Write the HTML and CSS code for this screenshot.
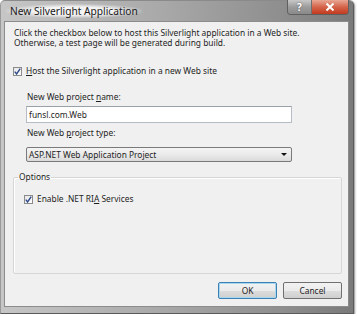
FILE: index.html
```html
<!DOCTYPE html>
<html lang="en">
<head>
    <meta charset="UTF-8">
    <title>New Silverlight Application</title>
    <link rel="stylesheet" href="styles.css">
</head>
<body>
    <div class="window">
        <div class="titlebar">
            <span class="title">New Silverlight Application</span>
            <div class="caption-btns">
                <span class="cap-btn help">?</span>
                <span class="cap-btn close">
                    <svg width="10" height="8" viewBox="0 0 10 8"><path d="M1.5 0.5 L8.5 7.5 M8.5 0.5 L1.5 7.5" stroke="#fff" stroke-width="2"/></svg>
                </span>
            </div>
        </div>

        <div class="client">
            <p class="intro">
                Click the checkbox below to host this Silverlight application in a Web site.<br>
                Otherwise, a test page will be generated during build.
            </p>

            <label class="check-row host">
                <span class="checkbox"><svg width="7" height="7" viewBox="0 0 7 7"><path d="M0.8 3.6 L2.6 6 L6.2 0.6" fill="none" stroke="#2f4a8a" stroke-width="1.4"/></svg></span>
                <span><u>H</u>ost the Silverlight application in a new Web site</span>
            </label>

            <div class="web-fields">
                <div class="field-label">New Web project <u>n</u>ame:</div>
                <div class="textbox">funsl.com.Web</div>

                <div class="field-label type-label">New Web <u>p</u>roject type:</div>
                <div class="combo">
                    <span>ASP.NET Web Application Project</span>
                    <span class="arrow"></span>
                </div>
            </div>

            <fieldset class="options">
                <legend>Options</legend>
                <label class="check-row">
                    <span class="checkbox"><svg width="7" height="7" viewBox="0 0 7 7"><path d="M0.8 3.6 L2.6 6 L6.2 0.6" fill="none" stroke="#2f4a8a" stroke-width="1.4"/></svg></span>
                    <span>Enable .NET RI<u>A</u> Services</span>
                </label>
            </fieldset>

            <div class="buttons">
                <span class="btn default">OK</span>
                <span class="btn">Cancel</span>
            </div>
        </div>
    </div>
</body>
</html>
```

FILE: styles.css
```css
body {
    margin: 0;
    background-color: #fff;
    font-family: "Noto Sans", "Open Sans", sans-serif;
    font-size: 8.4px;
    color: #1e1e1e;
}
.window {
    width: 345px;
    height: 307px;
    padding: 0 4px 5px 3px;
    border: 1px solid #5a5a5a;
    border-top-color: #8a8a8a;
    border-left-color: #9a9a9a;
    border-radius: 5px 5px 0 0;
    background: linear-gradient(to right, #c6c6c6, #a9a9a9 45%, #8e8e8e 80%, #7a7a7a);
    box-shadow: 1px 1px 2px rgba(0, 0, 0, 0.45);
}
.titlebar {
    display: flex;
    height: 20px;
    align-items: flex-start;
}
.title {
    margin: 3px 0 0 2px;
    padding: 0 4px;
    font-size: 10.2px;
    color: #1a1a1a;
    background: radial-gradient(ellipse at center, rgba(255, 255, 255, 0.85) 40%, rgba(255, 255, 255, 0) 75%);
}
.caption-btns {
    display: flex;
    margin-left: auto;
    margin-top: -1px;
    margin-right: 0;
    border: 1px solid #5f5f5f;
    border-top: none;
    border-radius: 0 0 4px 4px;
    overflow: hidden;
}
.cap-btn {
    display: flex;
    align-items: center;
    justify-content: center;
    height: 14px;
    color: #fff;
    font-weight: bold;
    font-size: 10px;
}
.help {
    width: 23px;
    background: linear-gradient(#c8c8c8, #9c9c9c 50%, #8a8a8a);
    border-right: 1px solid #6f6f6f;
    text-shadow: 0 0 2px #555;
}
.close {
    width: 36px;
    background: linear-gradient(#e8a794, #d4644a 50%, #c23a1e);
}
.client {
    height: 284px;
    background-color: #f0f0f0;
    border: 1px solid #8c8c8c;
    padding: 0;
}
.intro {
    margin: 0;
    padding: 6px 0 0 9px;
    line-height: 10px;
}
.check-row {
    display: flex;
    align-items: center;
    gap: 4px;
    line-height: 10px;
}
.host {
    margin: 18px 0 0 8px;
}
.checkbox {
    display: flex;
    align-items: center;
    justify-content: center;
    width: 7px;
    height: 7px;
    border: 1px solid #8b8b8b;
    background: linear-gradient(135deg, #e6e6e6, #ffffff);
}
.web-fields {
    margin: 16px 0 0 21px;
    width: 266px;
}
.field-label {
    line-height: 10px;
    padding-left: 1px;
}
.textbox {
    margin-top: 4px;
    height: 15px;
    line-height: 15px;
    padding-left: 2px;
    background-color: #fff;
    border: 1px solid #b6bcc6;
    border-top-color: #9aa0a8;
}
.type-label {
    margin-top: 5px;
}
.combo {
    display: flex;
    align-items: center;
    margin-top: 9px;
    height: 13px;
    padding: 0 4px 0 2px;
    border: 1px solid #7a7a7a;
    border-radius: 2px;
    background: linear-gradient(#f4f4f4, #eaeaea 50%, #dadada);
}
.arrow {
    margin-left: auto;
    width: 0;
    height: 0;
    border-left: 3px solid transparent;
    border-right: 3px solid transparent;
    border-top: 3px solid #111;
}
.options {
    margin: 10px 6px 0 8px;
    padding: 12px 10px 0 10px;
    height: 88px;
    border: 1px solid #d6d6d6;
    border-radius: 2px;
    box-shadow: inset 1px 1px 0 #fff;
}
.options legend {
    padding: 0 1px;
    margin-left: -6px;
    line-height: 10px;
}
.options .check-row {
    margin-left: 0;
}
.buttons {
    display: flex;
    justify-content: flex-end;
    gap: 6px;
    margin: 8px 6px 0 0;
}
.btn {
    display: flex;
    align-items: center;
    justify-content: center;
    width: 57px;
    height: 15px;
    border: 1px solid #707070;
    border-radius: 2px;
    background: linear-gradient(#f2f2f2, #ebebeb 50%, #dddddd 51%, #cfcfcf);
}
.btn.default {
    border-color: #3c7fb1;
    box-shadow: inset 0 0 0 1px #a8d8f0;
}
```
